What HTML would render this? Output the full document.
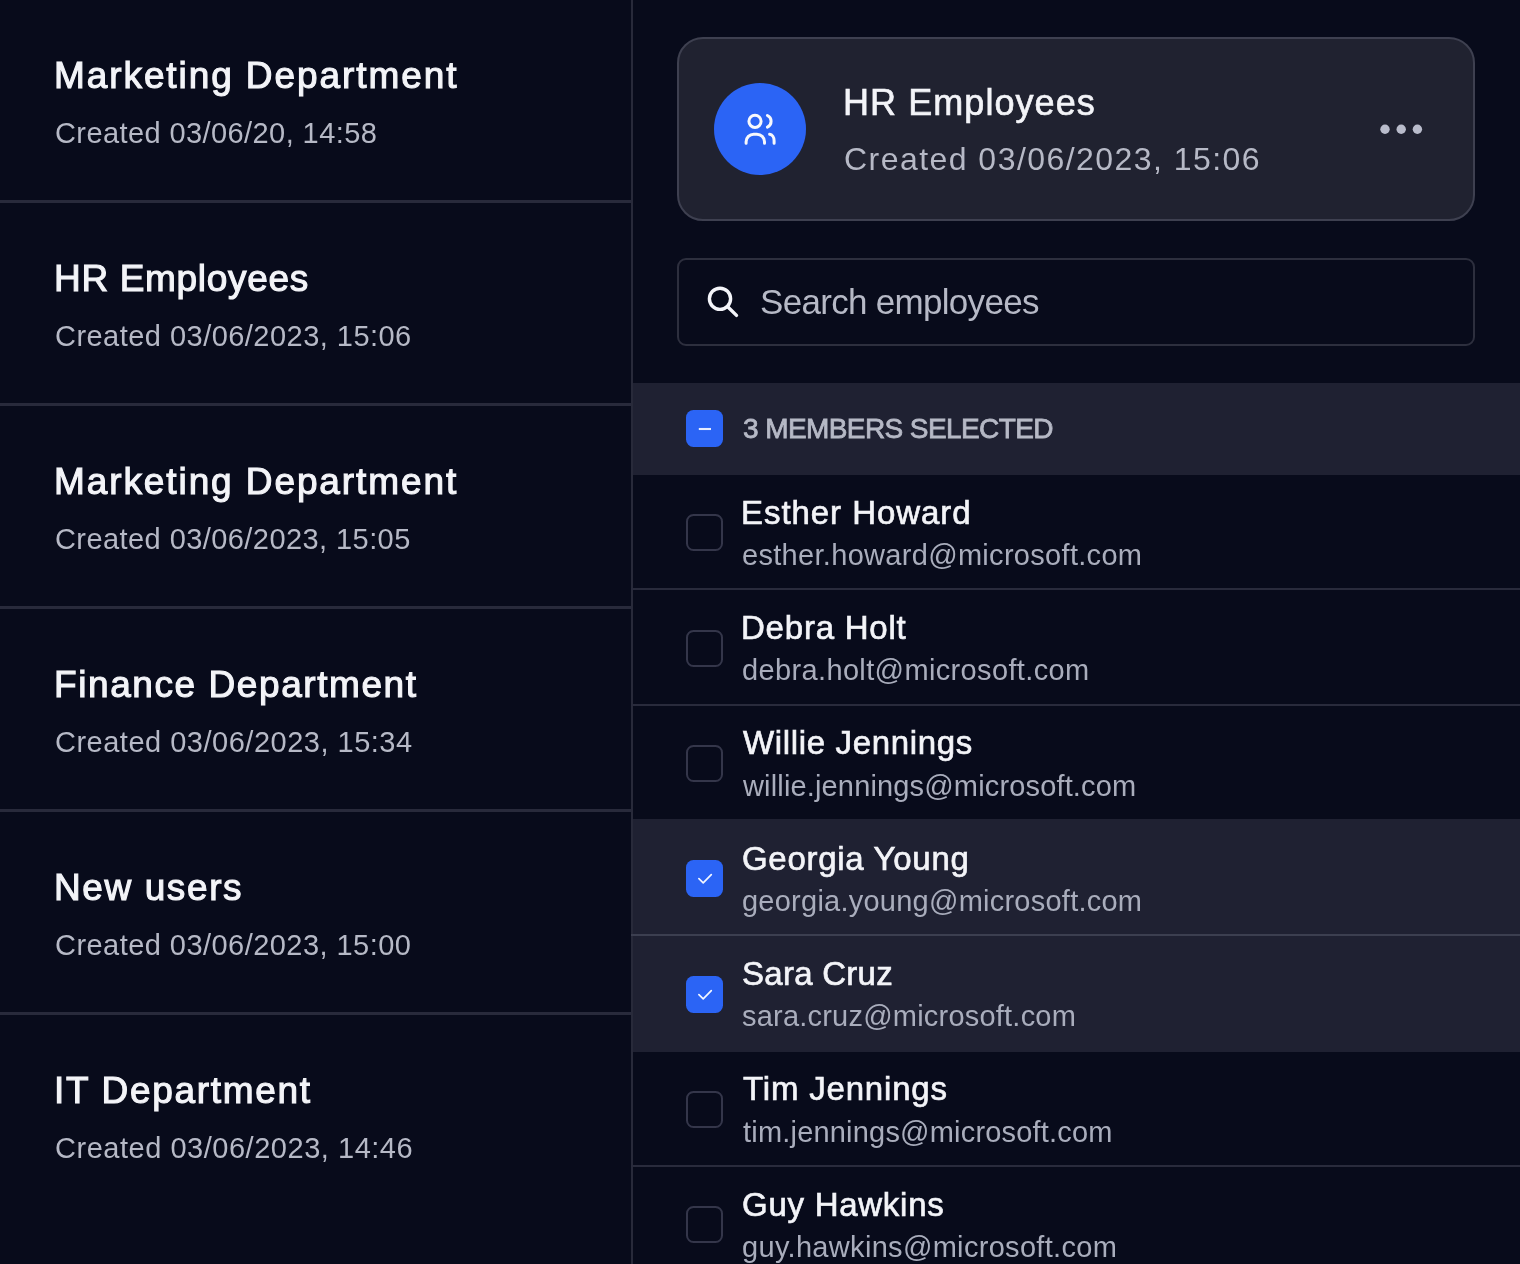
<!DOCTYPE html>
<html><head><meta charset="utf-8">
<style>
*{margin:0;padding:0;box-sizing:border-box}
html,body{width:1520px;height:1264px;overflow:hidden;background:#080b1b;font-family:"Liberation Sans",sans-serif}
.t{position:absolute;white-space:nowrap;line-height:1;will-change:transform}
.sep{position:absolute;left:0;width:631px;height:3px;background:#282a3b}
.divider{position:absolute;left:631px;top:0;width:2px;height:1264px;background:#282a3a}
.card{position:absolute;left:677px;top:37px;width:798px;height:184px;background:#202230;border:2px solid #3e4050;border-radius:26px}

.search{position:absolute;left:677px;top:258px;width:798px;height:88px;border:2px solid #2d2f3e;border-radius:9px}
.band{position:absolute;left:633px;width:887px;background:#1f2132}
.rsep{position:absolute;left:631px;width:889px;height:2px;background:#292b3c}
.rsep.on{background:#3c3f50}
.cb{position:absolute;left:686px;width:37px;height:37px;border-radius:7.5px}
.cb.off{border:2px solid #34364a}
.cb.on{background:#2b64f5}
</style></head><body>
<div class="sep" style="top:200px"></div>
<div class="sep" style="top:403px"></div>
<div class="sep" style="top:606px"></div>
<div class="sep" style="top:809px"></div>
<div class="sep" style="top:1012px"></div>
<div class="divider"></div>
<div class="card"></div>
<svg style="position:absolute;left:0;top:0" width="1520" height="260" viewBox="0 0 1520 260">
<circle cx="760" cy="129" r="46" fill="#2b64f5"/>
<g fill="none" stroke="#f7f8fc" stroke-width="3" stroke-linecap="round">
<circle cx="755" cy="121.3" r="6.1"/>
<path d="M767.4 115.5 A6.4 6.4 0 0 1 767.4 127.1"/>
<path d="M746.1 143.2 V141.7 A7.6 7.6 0 0 1 753.7 134.2 H756.9 A7.6 7.6 0 0 1 764.5 141.7 V143.2"/>
<path d="M769.6 134.2 A5 6.5 0 0 1 774.1 140.8 V143.2"/>
</g>
<g fill="#b9bccb"><circle cx="1385" cy="129.2" r="4.7"/><circle cx="1401.2" cy="129.2" r="4.7"/><circle cx="1417.4" cy="129.2" r="4.7"/></g>
</svg>
<div class="search"></div>
<svg style="position:absolute;left:690px;top:270px" width="60" height="60" viewBox="690 270 60 60">
<g fill="none" stroke="#f4f5fa" stroke-width="3.4" stroke-linecap="round"><circle cx="720" cy="298.8" r="10.6"/><path d="M728.2 307.2 L736.5 315.4"/></g></svg>
<div class="band" style="top:383px;height:92px"></div>
<div class="cb on" style="top:410px"><svg width="37" height="37" viewBox="0 0 37 37"><path d="M12.8 19 H25" stroke="#e6ecff" stroke-width="2.1"/></svg></div>
<div class="band" style="top:818.5px;height:233.5px"></div>
<div class="rsep" style="top:588.30px"></div>
<div class="cb off" style="top:514.30px"></div>
<div class="rsep" style="top:703.65px"></div>
<div class="cb off" style="top:629.65px"></div>
<div class="cb off" style="top:745.00px"></div>
<div class="rsep on" style="top:934.35px"></div>
<div class="cb on" style="top:860.35px"><svg width="37" height="37" viewBox="0 0 37 37"><path d="M12.9 18.7 L17.2 22.8 L25.3 14.7" fill="none" stroke="#f2f6ff" stroke-width="1.7" stroke-linecap="round" stroke-linejoin="round"/></svg></div>
<div class="cb on" style="top:975.70px"><svg width="37" height="37" viewBox="0 0 37 37"><path d="M12.9 18.7 L17.2 22.8 L25.3 14.7" fill="none" stroke="#f2f6ff" stroke-width="1.7" stroke-linecap="round" stroke-linejoin="round"/></svg></div>
<div class="rsep" style="top:1165.05px"></div>
<div class="cb off" style="top:1091.05px"></div>
<div class="cb off" style="top:1206.40px"></div>
<div class="t" id="lt0" style="left:53.94px;top:57.01px;font-size:37px;-webkit-text-stroke:1.1px #f3f4f8;color:#f3f4f8;letter-spacing:1.914px">Marketing Department</div>
<div class="t" id="ls0" style="left:54.90px;top:119.01px;font-size:29px;color:#b6b9c6;letter-spacing:0.409px">Created 03/06/20, 14:58</div>
<div class="t" id="lt1" style="left:53.94px;top:260.01px;font-size:37px;-webkit-text-stroke:1.1px #f3f4f8;color:#f3f4f8;letter-spacing:0.671px">HR Employees</div>
<div class="t" id="ls1" style="left:54.90px;top:322.01px;font-size:29px;color:#b6b9c6;letter-spacing:0.465px">Created 03/06/2023, 15:06</div>
<div class="t" id="lt2" style="left:53.94px;top:463.01px;font-size:37px;-webkit-text-stroke:1.1px #f3f4f8;color:#f3f4f8;letter-spacing:1.904px">Marketing Department</div>
<div class="t" id="ls2" style="left:54.90px;top:525.01px;font-size:29px;color:#b6b9c6;letter-spacing:0.427px">Created 03/06/2023, 15:05</div>
<div class="t" id="lt3" style="left:53.94px;top:666.01px;font-size:37px;-webkit-text-stroke:1.1px #f3f4f8;color:#f3f4f8;letter-spacing:1.578px">Finance Department</div>
<div class="t" id="ls3" style="left:54.90px;top:728.01px;font-size:29px;color:#b6b9c6;letter-spacing:0.502px">Created 03/06/2023, 15:34</div>
<div class="t" id="lt4" style="left:53.94px;top:869.01px;font-size:37px;-webkit-text-stroke:1.1px #f3f4f8;color:#f3f4f8;letter-spacing:1.598px">New users</div>
<div class="t" id="ls4" style="left:54.90px;top:931.01px;font-size:29px;color:#b6b9c6;letter-spacing:0.450px">Created 03/06/2023, 15:00</div>
<div class="t" id="lt5" style="left:53.94px;top:1072.01px;font-size:37px;-webkit-text-stroke:1.1px #f3f4f8;color:#f3f4f8;letter-spacing:1.695px">IT Department</div>
<div class="t" id="ls5" style="left:54.90px;top:1134.01px;font-size:29px;color:#b6b9c6;letter-spacing:0.525px">Created 03/06/2023, 14:46</div>
<div class="t" id="ct" style="left:842.60px;top:85.32px;font-size:36px;-webkit-text-stroke:0.65px #f3f4f8;color:#f3f4f8;letter-spacing:1.064px">HR Employees</div>
<div class="t" id="cs" style="left:843.50px;top:142.72px;font-size:32px;color:#b6b9c6;letter-spacing:1.455px">Created 03/06/2023, 15:06</div>
<div class="t" id="se" style="left:760.34px;top:283.80px;font-size:35px;color:#b6b9c6;letter-spacing:-0.696px">Search employees</div>
<div class="t" id="hd" style="left:743.02px;top:415.21px;font-size:28px;-webkit-text-stroke:0.8px #b6b9c6;color:#b6b9c6;letter-spacing:-0.588px">3 MEMBERS SELECTED</div>
<div class="t" id="n0" style="left:740.72px;top:495.70px;font-size:33px;-webkit-text-stroke:0.65px #f3f4f8;color:#f3f4f8;letter-spacing:0.945px">Esther Howard</div>
<div class="t" id="e0" style="left:741.62px;top:541.01px;font-size:29px;color:#a9adbc;letter-spacing:0.305px">esther.howard@microsoft.com</div>
<div class="t" id="n1" style="left:740.72px;top:611.05px;font-size:33px;-webkit-text-stroke:0.65px #f3f4f8;color:#f3f4f8;letter-spacing:0.780px">Debra Holt</div>
<div class="t" id="e1" style="left:741.62px;top:656.35px;font-size:29px;color:#a9adbc;letter-spacing:0.360px">debra.holt@microsoft.com</div>
<div class="t" id="n2" style="left:742.52px;top:726.41px;font-size:33px;-webkit-text-stroke:0.65px #f3f4f8;color:#f3f4f8;letter-spacing:0.656px">Willie Jennings</div>
<div class="t" id="e2" style="left:742.52px;top:771.71px;font-size:29px;color:#a9adbc;letter-spacing:0.154px">willie.jennings@microsoft.com</div>
<div class="t" id="n3" style="left:741.62px;top:841.75px;font-size:33px;-webkit-text-stroke:0.65px #f3f4f8;color:#f3f4f8;letter-spacing:0.705px">Georgia Young</div>
<div class="t" id="e3" style="left:741.62px;top:887.07px;font-size:29px;color:#a9adbc;letter-spacing:0.242px">georgia.young@microsoft.com</div>
<div class="t" id="n4" style="left:741.62px;top:957.11px;font-size:33px;-webkit-text-stroke:0.65px #f3f4f8;color:#f3f4f8;letter-spacing:0.270px">Sara Cruz</div>
<div class="t" id="e4" style="left:741.62px;top:1002.41px;font-size:29px;color:#a9adbc;letter-spacing:0.213px">sara.cruz@microsoft.com</div>
<div class="t" id="n5" style="left:742.52px;top:1072.45px;font-size:33px;-webkit-text-stroke:0.65px #f3f4f8;color:#f3f4f8;letter-spacing:0.818px">Tim Jennings</div>
<div class="t" id="e5" style="left:742.52px;top:1117.76px;font-size:29px;color:#a9adbc;letter-spacing:0.194px">tim.jennings@microsoft.com</div>
<div class="t" id="n6" style="left:741.62px;top:1187.80px;font-size:33px;-webkit-text-stroke:0.65px #f3f4f8;color:#f3f4f8;letter-spacing:0.738px">Guy Hawkins</div>
<div class="t" id="e6" style="left:741.62px;top:1233.10px;font-size:29px;color:#a9adbc;letter-spacing:0.315px">guy.hawkins@microsoft.com</div>
</body></html>
